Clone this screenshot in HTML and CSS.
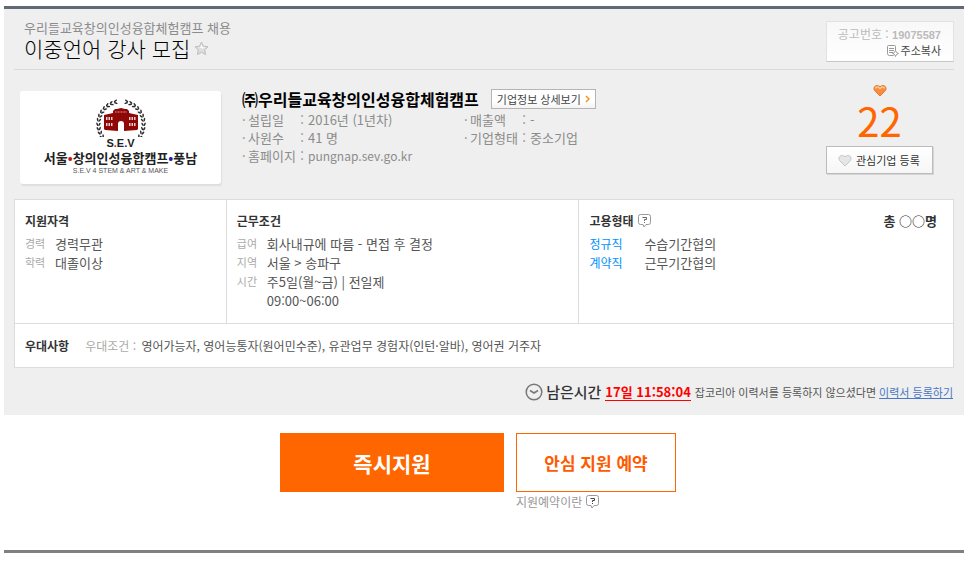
FILE: index.html
```html
<!DOCTYPE html>
<html lang="ko">
<head>
<meta charset="utf-8">
<title>이중언어 강사 모집</title>
<link rel="stylesheet" href="styles.css">
</head>
<body>
<main class="page">
  <section class="posting">
    <header class="head">
      <div>
        <p class="head-company">우리들교육창의인성융합체험캠프 채용</p>
        <h1 class="head-title">이중언어 강사 모집
          <svg class="star" width="15" height="15" viewBox="0 0 15 15"><path d="M7.500 1l2 4.200 4.500.6-3.300 3.100.9 4.600-4.100-2.200-4.100 2.200.9-4.600L1 5.800l4.500-.6z" fill="#dedede" stroke="#bdbdbd" stroke-linejoin="round"/><path d="M7.500 3l1.200 3 3 .4-3 1-4-1 2-.5z" fill="#fafafa"/></svg>
        </h1>
      </div>
      <div class="notice">
        <p class="notice-no">공고번호 : <b>19075587</b></p>
        <button class="copy" type="button">
          <svg width="13" height="13" viewBox="0 0 13 13" fill="none" stroke="#999"><path d="M7.500 11.500H3.500a2 2 0 0 1-2-2V2.500a1 1 0 0 1 1-1H8.500a1 1 0 0 1 1 1V6M3 4.500h5M3 6.500h5M3 8.500h4" /><path d="M9.500 6.500l1 2 2 1-2 1-1 2-1-2-2-1 2-1z" fill="#fff"/></svg>주소복사
        </button>
      </div>
    </header>

    <div class="company">
      <div class="logo">
        <svg width="52" height="38" viewBox="0 0 52 38">
          <defs>
            <g id="leaf" fill="#2c2c2c"><ellipse cx="-1.500" cy="-21.500" rx="1.900" ry=".8" transform="rotate(28 -1.500 -21.500)"/><ellipse cx="-1.500" cy="-23.700" rx="1.900" ry=".8" transform="rotate(-24 -1.500 -23.700)"/></g>
            <g id="branch"><use href="#leaf" transform="rotate(-10)"/><use href="#leaf" transform="rotate(-21)"/><use href="#leaf" transform="rotate(-32)"/><use href="#leaf" transform="rotate(-43)"/><use href="#leaf" transform="rotate(-54)"/><use href="#leaf" transform="rotate(-65)"/><use href="#leaf" transform="rotate(-76)"/><use href="#leaf" transform="rotate(-87)"/><use href="#leaf" transform="rotate(-98)"/><use href="#leaf" transform="rotate(-109)"/><use href="#leaf" transform="rotate(-120)"/></g>
          </defs>
          <g transform="translate(26 25)"><use href="#branch"/><use href="#branch" transform="scale(-1 1)"/></g>
          <path d="M9 16l9-2v-2l2-2h2l4-1 4 1h2l2 2v2l9 2v14l-1 1-13 1v-7q0-3-3-3t-3 3v7L10 31l-1-1z" fill="#8f0808"/>
          <path d="M20 13h12" stroke="#d99" stroke-dasharray="1 .5"/>
          <path d="M11 19.500h7M34 19.500h7M11 25.500h7M34 25.500h7" stroke="#f0cccc" stroke-width="3" stroke-dasharray="1.500 1"/>
        </svg>
        <div class="logo-sev">S<i class="red">.</i>E<i class="blue">.</i>V</div>
        <div class="logo-name">서울<i class="red">•</i>창의인성융합캠프<i class="blue">•</i>풍남</div>
        <div class="logo-tag">S.E.V 4 STEM &amp; ART &amp; MAKE</div>
      </div>
      <div class="info">
        <div class="info-head">
          <h2>㈜우리들교육창의인성융합체험캠프</h2>
          <button class="detail" type="button">기업정보 상세보기
            <svg width="5" height="8" viewBox="0 0 5 8"><path d="M1 1l3 3-3 3" fill="none" stroke="#f7931e" stroke-width="1.500"/></svg>
          </button>
        </div>
        <dl class="facts">
          <dt>설립일</dt><dd>2016년 (1년차)</dd>
          <dt>매출액</dt><dd>-</dd>
          <dt>사원수</dt><dd>41 명</dd>
          <dt>기업형태</dt><dd>중소기업</dd>
          <dt>홈페이지</dt><dd><a href="#home">pungnap.sev.go.kr</a></dd>
        </dl>
      </div>
      <div class="likes">
        <svg width="14" height="13" viewBox="0 0 14 13"><path d="M7 12L1.500 6.500C-.5 3 3.500-.5 7 2.800 10.500-.5 14.500 3 12.500 6.500z" fill="#fa8d3c" stroke="#dd7a38"/><path d="M2.500 4.500q.5-2 2.500-1.500l2 1.500 2-1.500q2-.5 2.500 1.500" fill="none" stroke="#ffc797" stroke-width="1.500"/></svg>
        <strong>22</strong>
        <button class="favorite" type="button">
          <svg width="14" height="13" viewBox="0 0 14 13"><path d="M7 12L1.500 6.500C-.5 3 3.500-.5 7 2.800 10.500-.5 14.500 3 12.500 6.500z" fill="#e6e6e6" stroke="#c4c4c4"/></svg>관심기업 등록
        </button>
      </div>
    </div>

    <div class="summary">
      <div class="columns">
        <section class="cell">
          <h3>지원자격</h3>
          <dl class="terms"><dt>경력</dt><dd>경력무관</dd><dt>학력</dt><dd>대졸이상</dd></dl>
        </section>
        <section class="cell">
          <h3>근무조건</h3>
          <dl class="terms"><dt>급여</dt><dd>회사내규에 따름 - 면접 후 결정</dd><dt>지역</dt><dd>서울 &gt; 송파구</dd><dt>시간</dt><dd>주5일(월~금) | 전일제<br>09:00~06:00</dd></dl>
        </section>
        <section class="cell">
          <div class="cell-head">
            <h3>고용형태</h3>
            <button class="help" type="button" aria-label="도움말"><svg width="13" height="14" viewBox="0 0 13 14" fill="none"><path d="M2.500.5h8a2 2 0 0 1 2 2v6a2 2 0 0 1-2 2H8l-2 2.500-1-2.500H2.500a2 2 0 0 1-2-2v-6a2 2 0 0 1 2-2z" fill="#fff" stroke="#999"/><path d="M4.500 3.500h4v2h-2v1.500M6 8.500h1" stroke="#666"/></svg></button>
            <b class="total">총 ○○명</b>
          </div>
          <dl class="terms types"><dt>정규직</dt><dd>수습기간협의</dd><dt>계약직</dt><dd>근무기간협의</dd></dl>
        </section>
      </div>
      <section class="preference">
        <h3>우대사항</h3>
        <p><span>우대조건 :</span> 영어가능자, 영어능통자(원어민수준), 유관업무 경험자(인턴·알바), 영어권 거주자</p>
      </section>
    </div>

    <div class="deadline">
      <svg width="18" height="18" viewBox="0 0 18 18" fill="none" stroke="#777" stroke-width="1.500"><circle cx="9" cy="9" r="7.800"/><path d="M5 7.500l4 2.500 4-2.500"/></svg>
      <b class="left">남은시간</b>
      <b class="clock">17일 11:58:04</b>
      <span>잡코리아 이력서를 등록하지 않으셨다면</span>
      <a href="#resume">이력서 등록하기</a>
    </div>
  </section>

  <div class="actions">
    <button class="apply" type="button">즉시지원</button>
    <div>
      <button class="reserve" type="button">안심 지원 예약</button>
      <p class="reserve-help">지원예약이란
        <button class="help" type="button" aria-label="지원예약 도움말"><svg width="13" height="14" viewBox="0 0 13 14" fill="none"><path d="M2.500.5h8a2 2 0 0 1 2 2v6a2 2 0 0 1-2 2H8l-2 2.500-1-2.500H2.500a2 2 0 0 1-2-2v-6a2 2 0 0 1 2-2z" fill="#fff" stroke="#999"/><path d="M4.500 3.500h4v2h-2v1.500M6 8.500h1" stroke="#444"/></svg></button>
      </p>
    </div>
  </div>
</main>
</body>
</html>
```
FILE: styles.css
```css
* { box-sizing: border-box; margin: 0; padding: 0; }
body { background: #fff; color: #555; font: 13px/18px "Noto Sans CJK KR", sans-serif; }
button { font: inherit; cursor: pointer; }
i { font-style: normal; }
svg { flex: none; display: block; }
.page { margin: 6px 7px 0 4px; padding-bottom: 39px; border-bottom: 3px solid #808083; }
.posting { padding: 0 10px; background: #efefef; border-top: 3px solid #606a74; }

.head { display: flex; justify-content: space-between; align-items: flex-start; height: 61px; padding: 10px 0 0 10px; border-bottom: 1px solid #dadada; }
.head-company { color: #8c8c8c; line-height: 17px; }
.head-title { display: flex; align-items: center; gap: 4px; color: #000; font-size: 21px; font-weight: 300; line-height: 24px; }
.notice { width: 128px; margin-top: 2px; padding: 3px 12px 0 0; height: 41px; background: linear-gradient(#f8f8f8, #fff); border: 1px solid #e2e2e2; border-bottom-color: #c8c8c8; text-align: right; font-size: 12px; line-height: 17px; color: #bbb; }
.notice b { font: bold 11px "Liberation Sans", sans-serif; }
.copy { display: flex; align-items: center; gap: 2px; margin-left: auto; border: 0; background: none; color: #444; font-size: 11px; line-height: 16px; }

.company { display: flex; align-items: flex-start; height: 129px; padding: 19px 21px 0 6px; }
.logo { display: flex; flex-direction: column; align-items: center; width: 201px; height: 93px; margin: 2px 21px 0 0; padding-top: 8px; background: #fff; border-radius: 3px; box-shadow: 1px 2px 1px #dedede; white-space: nowrap; }
.logo-sev { color: #222; font: bold 11px/12px "Liberation Sans", sans-serif; }
.logo-name { color: #222; font-size: 13px; font-weight: 700; line-height: 17px; }
.logo-tag { color: #555; font: 7px/10px "Liberation Sans", sans-serif; }
.red { color: #c01818; }
.blue { color: #2020b0; }
.info { flex: 1; }
.info-head { display: flex; align-items: center; gap: 12px; height: 20px; margin-bottom: 2px; white-space: nowrap; }
.info h2 { color: #000; font-size: 16px; line-height: 20px; }
.detail { display: flex; align-items: center; gap: 4px; height: 20px; padding: 0 5px; border: 1px solid #b5b5b5; background: linear-gradient(#fff 60%, #f3f3f3); color: #444; font-size: 11px; }
.facts { display: grid; grid-template-columns: 66px 156px 66px 1fr; color: #8c8c8c; white-space: nowrap; }
.facts dt { display: flex; }
.facts dt::before { content: "·"; width: 6px; }
.facts dt::after { content: ":"; margin-left: auto; padding-right: 4px; }
.facts a { color: inherit; font-size: 12px; text-decoration: none; }
.likes { display: flex; flex-direction: column; align-items: center; width: 107px; margin-top: -5px; }
.likes strong { color: #f60; font-size: 40px; font-weight: 400; line-height: 46px; margin-bottom: 3px; }
.favorite { display: flex; align-items: center; gap: 4px; width: 107px; height: 28px; padding: 0 11px; border: 1px solid #bbb; background: linear-gradient(#fff, #f6f6f6); box-shadow: 1px 1px 0 #d5d5d5; color: #333; font-size: 11px; white-space: nowrap; }

.summary { background: #fff; border: 1px solid #dcdcdc; }
h3 { color: #333; font-size: 12px; line-height: 18px; }
.columns { display: grid; grid-template-columns: 212fr 353fr 374fr; }
.cell { height: 124px; padding: 12px 16px 0 10px; border-right: 1px solid #dcdcdc; border-bottom: 1px solid #dcdcdc; }
.cell:last-child { border-right: 0; }
.cell-head { display: flex; align-items: center; gap: 4px; }
.help { border: 0; background: none; }
.total { margin-left: auto; color: #333; }
.terms { display: grid; grid-template-columns: 30px 1fr; line-height: 19px; margin-top: 4px; }
.terms dt { color: #aaa; font-size: 11px; }
.types { grid-template-columns: 55px 1fr; }
.types dt { color: #0091ff; font-size: 12px; }
.preference { display: flex; align-items: center; gap: 16px; height: 43px; padding: 0 10px; font-size: 12px; }
.preference p { line-height: 20px; }
.preference span { color: #aaa; margin-right: 2px; }

.deadline { display: flex; justify-content: flex-end; align-items: center; height: 47px; padding-right: 1px; font-size: 11px; white-space: nowrap; }
.left { margin: 0 4px 0 3px; color: #333; font-size: 15px; font-weight: 500; }
.clock { margin-right: 4px; border-bottom: 1px solid #f00; color: #f00; font-size: 13px; line-height: 17px; }
.deadline a { margin-left: 3px; color: #4a76c4; }

.actions { display: flex; justify-content: center; align-items: flex-start; gap: 12px; padding: 18px 12px 0 0; }
.apply, .reserve { display: block; height: 59px; border: 1px solid #f60; font-weight: 700; }
.apply { width: 224px; background: #f60; color: #fff; font-size: 21px; }
.reserve { width: 160px; background: #fff; color: #ff5a00; font-size: 17px; }
.reserve-help { display: flex; align-items: center; gap: 4px; color: #999; font-size: 12px; line-height: 19px; }
```
